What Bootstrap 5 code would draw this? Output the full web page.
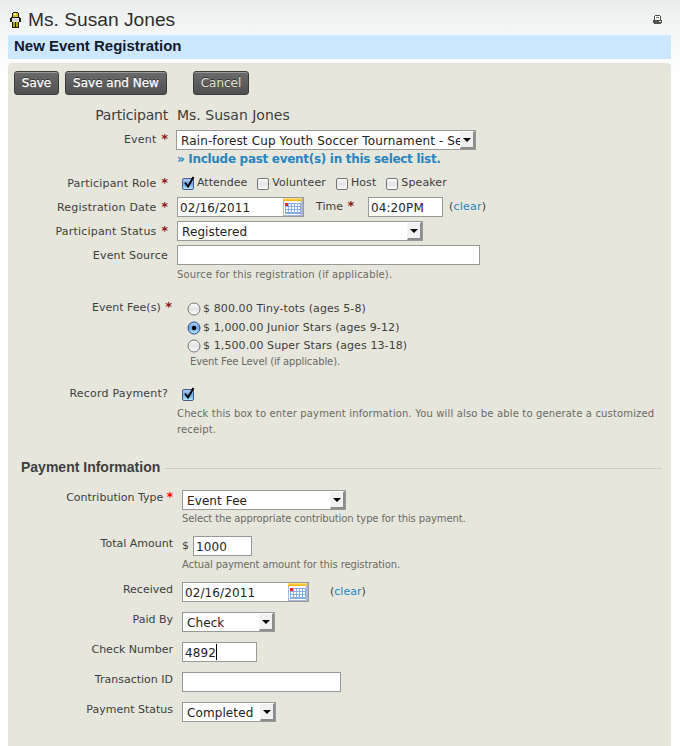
<!DOCTYPE html>
<html lang="en">
<head>
<meta charset="utf-8">
<meta name="viewport" content="width=device-width, initial-scale=1">
<title>New Event Registration</title>
<link href="https://cdn.jsdelivr.net/npm/bootstrap@5.3.0/dist/css/bootstrap.min.css" rel="stylesheet">
<style>
body{font-family:"DejaVu Sans",sans-serif;font-size:11px;line-height:16px;color:#3e3e3e;background:#fff linear-gradient(#e9eeec,#f4f7f6 35px,#fff 80px) no-repeat;height:746px;overflow:hidden}
a{color:#2786c2;text-decoration:none}
.page-head{height:35px;padding:5px 18px 0 10px}
.page-head h1{font:19.2px/30px "Liberation Sans",Arial,sans-serif;margin:0 0 0 7px;color:#2f2f2f}
.person{margin-top:7px}
.printer{margin-top:10px}
.title-bar{height:24px;margin:0 9px 4px 8px;padding-left:6px;background:#cde8fe;font:bold 15px/22px "Liberation Sans",Arial,sans-serif;color:#121a2d}
.title-bar h2{font:inherit;margin:0}
.panel{margin:0 9px 0 8px;height:683px;background:#e6e6dc;border-radius:4px 4px 0 0;padding-top:8px}
.actions{height:34px;padding-left:6px;gap:6px}
.btn-dk{height:24px;border:1px solid #3c3c3c;border-radius:3px;background:linear-gradient(#6b6b6b,#505050);box-shadow:inset 0 1px #999;color:#fff;font-size:12px;line-height:22px;padding:0;text-shadow:0 -1px 0 #333;-webkit-text-stroke:.25px #fff}
.btn-dk:hover{color:#fff;background:#555}
.w-save{width:45px}.w-new{width:102px}.w-cancel{width:56px;margin-left:20px;color:#e2e2d6;-webkit-text-stroke:0}
.f-row{display:flex;align-items:flex-start}
.lab{flex:none;width:160px;text-align:right;white-space:nowrap;padding-top:3px;letter-spacing:.2px}
.low .lab{width:165px;padding-top:0;letter-spacing:0}
.fld{flex:1;margin-left:9px}
.req{color:#8d1a14;font-weight:bold;font-size:13px;line-height:1;margin-left:1px;letter-spacing:0}
.req.bright{color:#f00;font-size:12px;margin-left:0}
.box{flex:none;height:20px;border:1px solid #999;background:#fff;color:#222;font-size:12px;line-height:20px;padding:0 0 0 2px;white-space:nowrap;overflow:hidden;display:flex;letter-spacing:.1px}
.box.sel{padding-left:4px}
.txt{flex:1;overflow:hidden;min-width:0}
.arrow{flex:none;width:15px;height:18px;background:#f1f1f1;border:solid;border-width:1px 2px 2px 1px;border-color:#fff #8c8c8c #8c8c8c #f6f6f6;display:flex;align-items:center;justify-content:center}
.arrow::before{content:"";border:4px solid transparent;border-top:4px solid #000;border-bottom:0}
.hint{color:#6b6b66;font-size:10px;line-height:16px;letter-spacing:.15px;padding-top:2px}
.r-fee .hint{letter-spacing:-.12px;padding:0 0 0 3px;margin-top:-1px}
.low .hint{letter-spacing:-.12px;padding-top:1px}
.r-rec .hint{padding-top:3px}
.r-big{height:25px;font-size:14px;line-height:20px}
.r-big .lab{padding:0;letter-spacing:-.2px}
.r-event{height:43px}
.r-event .lab{padding-top:2px}
.r24{height:24px}.r30{height:30px}.r46{height:46px}
.r-src{height:55px}
.r-fee{height:84px}
.r-fee .lab{padding:0;width:164px;letter-spacing:0}
.r-fee .fld{margin-left:5px;padding-left:10px}
.r-fee .opt:first-child{margin-bottom:1px}
.r-rec{height:70px}
.r-rec .lab{padding-top:2px}
.r-roles,.r-rec .fld{padding-top:1px}
.r-roles .lab{padding-top:2px}
.r-roles .opt:first-child{letter-spacing:0}
.w300{width:300px;margin-left:-1px}.w127{width:127px}.w75{width:75px}.w246{width:246px}.w303{width:303px}
.w164{width:164px}.w59{width:59px}.w93{width:93px}.w159{width:159px}.w94{width:94px}
.w300 .txt{letter-spacing:.13px}
.more{font-size:12px;line-height:18px;font-weight:bold;letter-spacing:-.3px;white-space:nowrap}
.opt{display:flex;align-items:center;height:18px;white-space:nowrap;letter-spacing:.1px}
.opt span{margin-left:2px}
.o-vol{margin-left:9px}
.gap-time{width:64px;padding:2px 0 0 12px;white-space:nowrap}
.gap-clear{margin-left:6px;padding-top:2px;letter-spacing:.2px}
.gap-clear2{margin-left:21px;padding-top:2px}
.legend-row{height:36px;padding:4px 9px 0 13px}
.legend-row h3{font:bold 14px/18px "Liberation Sans",Arial,sans-serif;margin:0 5px 0 0;color:#3e3e3e}
.rule{flex:1;height:1px;background:#cdcdc0;margin-top:10px}
.caret{width:1px;height:16px;background:#000;margin-top:1px}
</style>
</head>
<body>
<svg width="0" height="0" class="position-absolute">
<defs>
<linearGradient id="gw" x2="0" y2="1"><stop stop-color="#fff"/><stop offset=".5" stop-color="#e3e3e3"/><stop offset="1" stop-color="#fff"/></linearGradient>
<linearGradient id="gb" x2="0" y2="1"><stop stop-color="#b5d3f5"/><stop offset=".5" stop-color="#66a5e8"/><stop offset="1" stop-color="#bdf0ff"/></linearGradient>
<linearGradient id="gy" x2="0" y2="1"><stop stop-color="#ffe58a"/><stop offset="1" stop-color="#f0b000"/></linearGradient>
<symbol id="cb0" viewBox="0 0 14 15"><rect x="1.500" y="2.500" width="11" height="11" rx="1.500" fill="url(#gw)" stroke="#777"/></symbol>
<symbol id="cb1" viewBox="0 0 14 15"><rect x="1.500" y="2.500" width="11" height="11" rx="1.500" fill="url(#gb)" stroke="#4a5a8c"/><path d="M4 6.500l3 4L12.500 1" fill="none" stroke="#000" stroke-width="2"/></symbol>
<symbol id="rb0" viewBox="0 0 14 14"><circle cx="7" cy="7" r="6" fill="url(#gw)" stroke="#777"/></symbol>
<symbol id="rb1" viewBox="0 0 14 14"><circle cx="7" cy="7" r="6" fill="url(#gb)" stroke="#33478c"/><circle cx="7" cy="7" r="2.200" fill="#000"/></symbol>
<symbol id="cal" viewBox="0 0 20 18"><path fill="#a9b6d6" d="M0 0h20v18H0z"/><path fill="#fff" d="M1 3h17v14H1z"/><path fill="url(#gy)" d="M0 0h19v3H0z"/><path fill="#86ade2" d="M2 5h16v11H2z"/><path d="M3 6h2v2H3zm3 0h2v2H6zm3 0h2v2H9zm3 0h2v2h-2zm3 0h2v2h-2zM3 9h2v2H3zm3 0h2v2H6zm3 0h2v2H9zm3 0h2v2h-2zm3 0h2v2h-2zM3 12h2v2H3zm3 0h2v2H6zm3 0h2v2H9zm3 0h2v2h-2zm3 0h2v2h-2z" fill="#fff"/><path fill="#e52b20" d="M2 5h3v3H2z"/></symbol>
</defs>
</svg>
<header class="page-head d-flex align-items-start">
<svg class="person" width="11" height="16" viewBox="0 0 11 16"><path fill="#1c1b12" d="M3 0h5v1h1v4h1v1h1v4H9v6H2v-6H0V6h1V5h1V1h1z"/><path fill="#d7c622" d="M3 1h5v4H3z"/><path fill="#fff5a0" d="M4 1h2v2H4z"/><path fill="#ddd" d="M2 6h7v4H2z"/><path fill="#b5a31c" d="M3 10h2v5H3zM6 10h2v5H6z"/></svg>
<h1>Ms. Susan Jones</h1>
<svg class="printer ms-auto" width="9" height="9" viewBox="0 0 9 9"><path fill="#50504a" d="M2 0h5v1h1v4h1v3H8v1H1V8H0V5h1V1h1z"/><path fill="#f1f4f3" d="M2 1h5v4H2zM6 6h2v1H6z"/><path fill="#777" d="M3 2h3v1H3z"/></svg>
</header>
<div class="title-bar"><h2>New Event Registration</h2></div>
<main class="panel">
<div class="actions d-flex">
<button class="btn btn-dk w-save">Save</button><button class="btn btn-dk w-new">Save and New</button><button class="btn btn-dk w-cancel">Cancel</button>
</div>
<div class="f-row r-big"><div class="lab">Participant</div><div class="fld">Ms. Susan Jones</div></div>
<div class="f-row r-event"><div class="lab">Event <span class="req">*</span></div>
<div class="fld"><div class="box sel w300"><span class="txt">Rain-forest Cup Youth Soccer Tournament - Se</span><span class="arrow"></span></div><div class="more"><a href="#">» Include past event(s) in this select list.</a></div></div></div>
<div class="f-row r24 r-roles"><div class="lab">Participant Role <span class="req">*</span></div>
<div class="fld d-flex">
<label class="opt ms-1"><svg width="14" height="15"><use href="#cb1"/></svg><span>Attendee</span></label>
<label class="opt o-vol"><svg width="14" height="15"><use href="#cb0"/></svg><span>Volunteer</span></label>
<label class="opt o-vol"><svg width="14" height="15"><use href="#cb0"/></svg><span>Host</span></label>
<label class="opt o-vol"><svg width="14" height="15"><use href="#cb0"/></svg><span>Speaker</span></label>
</div></div>
<div class="f-row r24"><div class="lab">Registration Date <span class="req">*</span></div>
<div class="fld d-flex"><div class="box w127"><span class="txt">02/16/2011</span><svg width="20" height="18"><use href="#cal"/></svg></div><span class="gap-time">Time <span class="req">*</span></span><div class="box w75"><span class="txt">04:20PM</span></div><span class="gap-clear">(<a href="#">clear</a>)</span></div></div>
<div class="f-row r24"><div class="lab">Participant Status <span class="req">*</span></div><div class="fld"><div class="box sel w246"><span class="txt">Registered</span><span class="arrow"></span></div></div></div>
<div class="f-row r-src"><div class="lab">Event Source</div><div class="fld"><div class="box w303"></div><div class="hint">Source for this registration (if applicable).</div></div></div>
<div class="f-row r-fee"><div class="lab">Event Fee(s) <span class="req">*</span></div>
<div class="fld">
<label class="opt"><svg width="14" height="14"><use href="#rb0"/></svg><span>$ 800.00 Tiny-tots (ages 5-8)</span></label>
<label class="opt"><svg width="14" height="14"><use href="#rb1"/></svg><span>$ 1,000.00 Junior Stars (ages 9-12)</span></label>
<label class="opt"><svg width="14" height="14"><use href="#rb0"/></svg><span>$ 1,500.00 Super Stars (ages 13-18)</span></label>
<div class="hint">Event Fee Level (if applicable).</div></div></div>
<div class="f-row r-rec"><div class="lab">Record Payment?</div><div class="fld"><label class="opt ms-1"><svg width="14" height="15"><use href="#cb1"/></svg></label><div class="hint">Check this box to enter payment information. You will also be able to generate a customized receipt.</div></div></div>
<div class="legend-row d-flex"><h3>Payment Information</h3><div class="rule"></div></div>
<div class="low">
<div class="f-row r46"><div class="lab">Contribution Type <span class="req bright">*</span></div><div class="fld"><div class="box sel w164"><span class="txt">Event Fee</span><span class="arrow"></span></div><div class="hint">Select the appropriate contribution type for this payment.</div></div></div>
<div class="f-row r46"><div class="lab">Total Amount</div><div class="fld"><div class="d-flex align-items-center"><span class="me-1">$</span><div class="box w59"><span class="txt">1000</span></div></div><div class="hint">Actual payment amount for this registration.</div></div></div>
<div class="f-row r30"><div class="lab">Received</div><div class="fld d-flex"><div class="box w127"><span class="txt">02/16/2011</span><svg width="20" height="18"><use href="#cal"/></svg></div><span class="gap-clear2">(<a href="#">clear</a>)</span></div></div>
<div class="f-row r30"><div class="lab">Paid By</div><div class="fld"><div class="box sel w93"><span class="txt">Check</span><span class="arrow"></span></div></div></div>
<div class="f-row r30"><div class="lab">Check Number</div><div class="fld"><div class="box w75"><span>4892</span><i class="caret"></i></div></div></div>
<div class="f-row r30"><div class="lab">Transaction ID</div><div class="fld"><div class="box w159"></div></div></div>
<div class="f-row r30"><div class="lab">Payment Status</div><div class="fld"><div class="box sel w94"><span class="txt">Completed</span><span class="arrow"></span></div></div></div>
</div>
</main>
</body>
</html>
